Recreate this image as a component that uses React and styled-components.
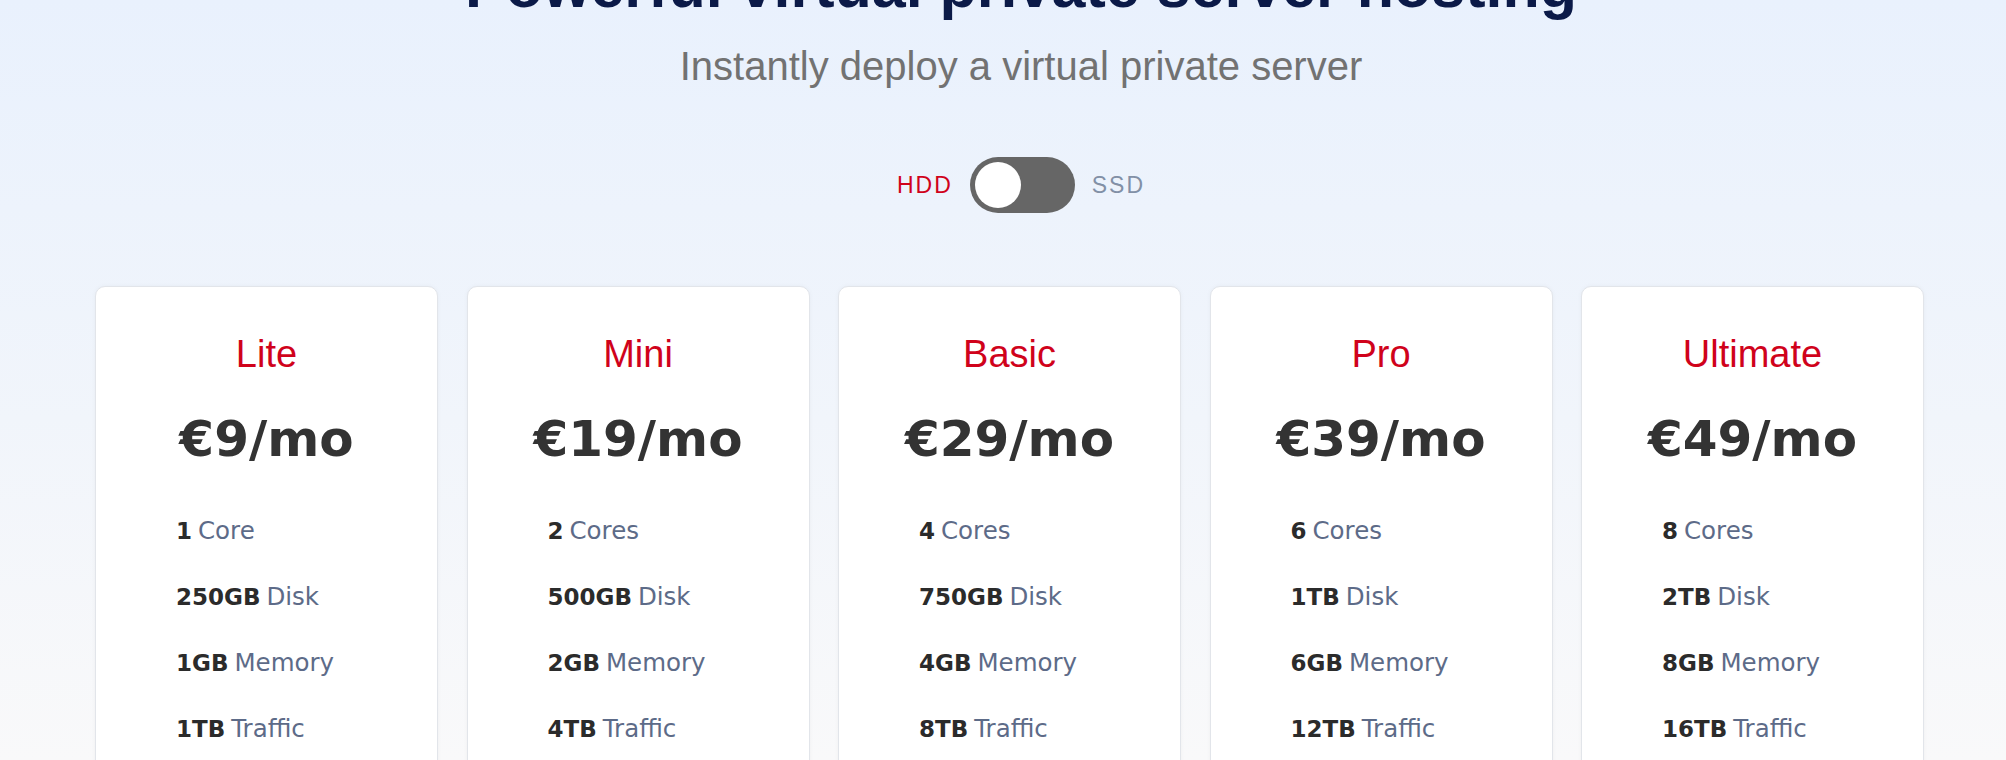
import React, { useState } from "react";
import styled, { createGlobalStyle } from "styled-components";

const GlobalStyle = createGlobalStyle`
  html, body {
    margin: 0;
    padding: 0;
  }
  body {
    height: 760px;
    overflow: hidden;
    background: linear-gradient(180deg, #e9f1fd 0%, #f1f5fb 55%, #f9f9fa 100%);
    font-family: "Liberation Sans", Arial, sans-serif;
  }
`;

const Page = styled.div`
  width: 100%;
  height: 760px;
  overflow: hidden;
`;

const Header = styled.header`
  display: flex;
  flex-direction: column;
  align-items: center;
  padding-left: 36px;
`;

const Title = styled.h1`
  margin: -49px 0 0 0;
  font-size: 61px;
  line-height: 70px;
  font-weight: 700;
  color: #0b1a48;
  white-space: nowrap;
`;

const Subtitle = styled.p`
  margin: 21px 0 0 0;
  font-size: 40px;
  line-height: 48px;
  color: #727272;
`;

const ToggleRow = styled.div`
  display: flex;
  align-items: center;
  gap: 17px;
  margin-top: 67px;
`;

const ToggleLabel = styled.span`
  font-size: 23px;
  letter-spacing: 2px;
  color: ${(p) => (p.$active ? "#d0021b" : "#8290a6")};
`;

const Track = styled.button`
  display: flex;
  align-items: center;
  justify-content: ${(p) => (p.$on ? "flex-end" : "flex-start")};
  width: 105px;
  height: 56px;
  padding: 0 5px;
  border: none;
  border-radius: 28px;
  background-color: #666666;
  cursor: pointer;
`;

const Knob = styled.span`
  width: 46px;
  height: 46px;
  border-radius: 50%;
  background-color: #ffffff;
`;

const Cards = styled.div`
  display: flex;
  gap: 28.5px;
  margin-top: 73px;
  padding-left: 95px;
`;

const Card = styled.div`
  flex: 0 0 343px;
  box-sizing: border-box;
  height: 520px;
  padding: 45px 0 0 0;
  background-color: #ffffff;
  border: 1px solid #e2e5ea;
  border-radius: 10px;
  box-shadow: 0 0 5px rgba(0, 0, 0, 0.04);
`;

const PlanName = styled.h2`
  margin: 0;
  text-align: center;
  font-size: 38px;
  line-height: 44px;
  font-weight: 400;
  color: #d0021b;
`;

const Price = styled.div`
  margin-top: 34px;
  text-align: center;
  font-family: "DejaVu Sans", sans-serif;
  font-size: 50px;
  line-height: 58px;
  font-weight: 700;
  color: #333333;
`;

const Features = styled.ul`
  list-style: none;
  margin: 30px 0 0 0;
  padding: 0 0 0 80px;
`;

const Feature = styled.li`
  font-family: "DejaVu Sans", sans-serif;
  font-size: 24.5px;
  line-height: 66px;
  color: #5d6b88;

  b {
    font-weight: 700;
    font-size: 23px;
    color: #2b2b2b;
    margin-right: 6px;
  }
`;

const plans = [
  { name: "Lite", price: 9, cores: "1", coreLabel: "Core", disk: "250GB", mem: "1GB", traffic: "1TB" },
  { name: "Mini", price: 19, cores: "2", coreLabel: "Cores", disk: "500GB", mem: "2GB", traffic: "4TB" },
  { name: "Basic", price: 29, cores: "4", coreLabel: "Cores", disk: "750GB", mem: "4GB", traffic: "8TB" },
  { name: "Pro", price: 39, cores: "6", coreLabel: "Cores", disk: "1TB", mem: "6GB", traffic: "12TB" },
  { name: "Ultimate", price: 49, cores: "8", coreLabel: "Cores", disk: "2TB", mem: "8GB", traffic: "16TB" },
];

export default function App() {
  const [ssd, setSsd] = useState(false);
  return (
    <>
      <GlobalStyle />
      <Page>
        <Header>
          <Title>Powerful virtual private server hosting</Title>
          <Subtitle>Instantly deploy a virtual private server</Subtitle>
          <ToggleRow>
            <ToggleLabel $active={!ssd}>HDD</ToggleLabel>
            <Track $on={ssd} onClick={() => setSsd(!ssd)} aria-label="Toggle disk type">
              <Knob />
            </Track>
            <ToggleLabel $active={ssd}>SSD</ToggleLabel>
          </ToggleRow>
        </Header>
        <Cards>
          {plans.map((p) => (
            <Card key={p.name}>
              <PlanName>{p.name}</PlanName>
              <Price>€{p.price}/mo</Price>
              <Features>
                <Feature><b>{p.cores}</b>{p.coreLabel}</Feature>
                <Feature><b>{p.disk}</b>Disk</Feature>
                <Feature><b>{p.mem}</b>Memory</Feature>
                <Feature><b>{p.traffic}</b>Traffic</Feature>
              </Features>
            </Card>
          ))}
        </Cards>
      </Page>
    </>
  );
}
